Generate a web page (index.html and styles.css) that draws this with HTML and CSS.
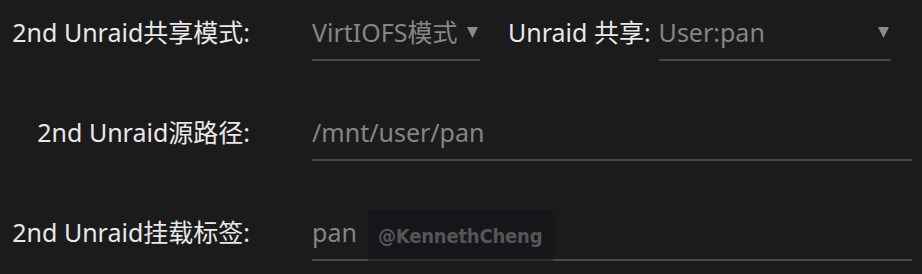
FILE: index.html
```html
<!DOCTYPE html>
<html lang="zh-CN">
<head>
<meta charset="utf-8">
<title>Unraid</title>
<link rel="stylesheet" href="styles.css">
</head>
<body>
<div class="form">
  <div class="label">2nd Unraid共享模式:</div>
  <div class="controls">
    <div class="select s1">
      <span class="value">VirtIOFS模式</span>
      <svg class="arrow" width="11" height="11" viewBox="0 0 11 11"><path d="M0 0 H11 L5.5 11 Z" fill="#8a8a8a"/></svg>
    </div>
    <span class="label2">Unraid 共享:</span>
    <div class="select s2">
      <span class="value">User:pan</span>
      <svg class="arrow" width="11" height="11" viewBox="0 0 11 11"><path d="M0 0 H11 L5.5 11 Z" fill="#8a8a8a"/></svg>
    </div>
  </div>

  <div class="label">2nd Unraid源路径:</div>
  <div class="field"><span class="value">/mnt/user/pan</span></div>

  <div class="label">2nd Unraid挂载标签:</div>
  <div class="field mark-host">
    <span class="value">pan</span>
    <div class="watermark">@KennethCheng</div>
  </div>
</div>
</body>
</html>
```
FILE: styles.css
```css
* { box-sizing: border-box; }

body {
  margin: 0;
  background: #1b1b1b;
  font-family: "Noto Sans", "Noto Sans CJK SC", sans-serif;
  font-size: 25px;
  line-height: 30px;
}

.form {
  display: grid;
  grid-template-columns: 250px 600px;
  column-gap: 62px;
  row-gap: 56px;
  padding-top: 17px;
}

.label {
  color: #e8e8e8;
  text-align: right;
  white-space: nowrap;
  height: 30px;
}

.value {
  color: #858585;
  white-space: nowrap;
}

.controls {
  display: flex;
  align-items: flex-start;
}

.select {
  display: flex;
  justify-content: space-between;
  align-items: center;
  height: 44px;
  padding: 0 2px 12px 0;
  border-bottom: 2px solid #474747;
}

.s1 { width: 168px; }
.s2 { width: 232px; }

.arrow { flex: none; }

.label2 {
  color: #e8e8e8;
  white-space: nowrap;
  margin-left: 28px;
  margin-right: 8px;
}

.field {
  height: 44px;
  padding-bottom: 12px;
  border-bottom: 2px solid #474747;
}

.mark-host { position: relative; }

.watermark {
  position: absolute;
  left: 56px;
  top: -7px;
  width: 185px;
  height: 51px;
  display: flex;
  align-items: center;
  padding-left: 10px;
  background: rgba(14, 14, 26, 0.42);
  color: #555555;
  font-family: "Liberation Sans Narrow", "DejaVu Sans Condensed", sans-serif;
  font-weight: bold;
  font-size: 20px;
  letter-spacing: -0.2px;
  white-space: nowrap;
}
```
